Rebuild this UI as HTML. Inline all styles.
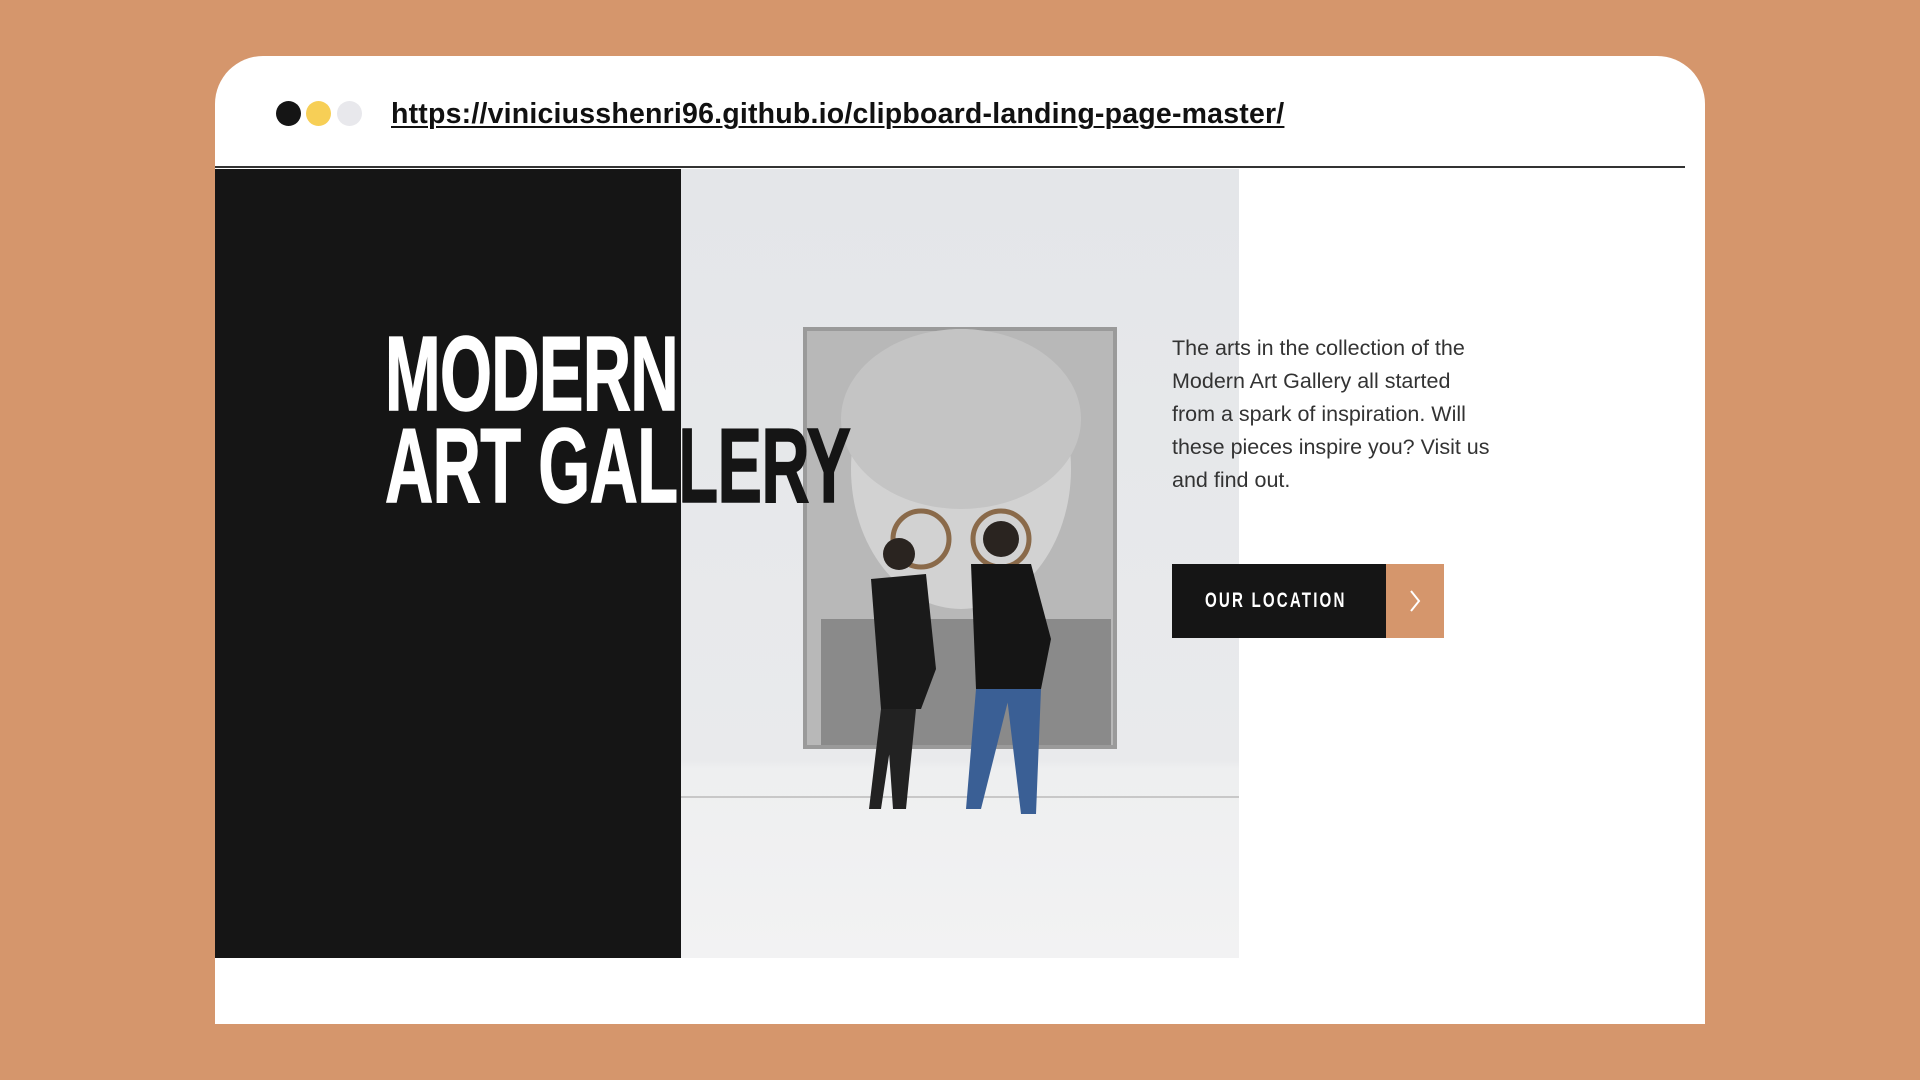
<!DOCTYPE html>
<html><head><meta charset="utf-8"><style>
html,body{margin:0;padding:0;width:1920px;height:1080px;overflow:hidden;background:#D5966C;font-family:"Liberation Sans",sans-serif}
.card{position:absolute;left:215px;top:56px;width:1490px;height:968px;background:#fff;border-radius:48px 48px 0 0}
.dot{position:absolute;top:101px;width:25px;height:25px;border-radius:50%}
.url{position:absolute;left:391px;top:98px;font-size:28.5px;font-weight:bold;color:#111;text-decoration:underline;text-decoration-thickness:2px;text-underline-offset:3px;letter-spacing:0.2px}
.line{position:absolute;left:215px;top:166px;width:1470px;height:2px;background:#333}
.black{position:absolute;left:215px;top:169px;width:466px;height:789px;background:#151515}
.img{position:absolute;left:681px;top:169px;width:558px;height:789px;background:linear-gradient(#e4e6e9 0%,#e9eaec 75%,#eeeff0 76%,#f2f2f3 100%);overflow:hidden}
.h{position:absolute;left:385px;top:328px;font-family:"Liberation Sans Narrow","Liberation Sans",sans-serif;font-weight:bold;font-size:106px;line-height:92px;transform:scaleX(0.63);transform-origin:left top;white-space:nowrap;letter-spacing:-1px;-webkit-text-stroke:1.5px currentColor}
.p{position:absolute;left:1172px;top:332px;width:322px;font-size:21.5px;line-height:33px;color:#333}
.btn{position:absolute;left:1172px;top:564px;width:214px;height:74px;background:#151515}
.btn span{position:absolute;left:33px;top:0;color:#fff;font-weight:bold;font-size:21px;letter-spacing:3px;line-height:74px;white-space:nowrap;transform:scaleX(0.72);transform-origin:left center;font-family:"Liberation Sans Narrow","Liberation Sans",sans-serif}
.arr{position:absolute;left:1386px;top:564px;width:58px;height:74px;background:#D5966C}
</style></head><body>
<div class="card"></div>
<div class="dot" style="left:276px;background:#151515"></div>
<div class="dot" style="left:306px;background:#F7CF56"></div>
<div class="dot" style="left:337px;background:#e8e8ec"></div>
<div class="url">https://viniciusshenri96.github.io/clipboard-landing-page-master/</div>
<div class="line"></div>
<div class="black"></div>
<div class="img">
<svg width="558" height="789" viewBox="0 0 558 789">
<rect x="122" y="158" width="314" height="422" fill="#9a9a9a"/>
<rect x="126" y="162" width="306" height="414" fill="#b8b8b8"/>
<ellipse cx="280" cy="300" rx="110" ry="140" fill="#d2d2d2"/>
<ellipse cx="280" cy="250" rx="120" ry="90" fill="#c4c4c4"/>
<rect x="140" y="450" width="290" height="126" fill="#8a8a8a"/>
<circle cx="240" cy="370" r="28" fill="none" stroke="#8a6a4a" stroke-width="5"/>
<circle cx="320" cy="370" r="28" fill="none" stroke="#8a6a4a" stroke-width="5"/>
<line x1="0" y1="628" x2="558" y2="628" stroke="#c8c8c8" stroke-width="2"/>
<circle cx="218" cy="385" r="16" fill="#2a2420"/>
<path d="M190 410 L245 405 L255 500 L240 540 L200 540 Z" fill="#1a1a1a"/>
<path d="M205 540 L235 540 L225 640 L212 640 Z M200 540 L215 540 L200 640 L188 640 Z" fill="#222"/>
<circle cx="320" cy="370" r="18" fill="#2a2420"/>
<path d="M290 395 L350 395 L370 470 L360 520 L295 520 Z" fill="#151515"/>
<path d="M295 520 L330 520 L300 640 L285 640 Z M325 520 L360 520 L355 645 L340 645 Z" fill="#3a5f95"/>
</svg>
</div>
<div class="h" style="color:#fff"><div style="clip-path:polygon(0 0,472px 0,472px 300px,0 300px)">MODERN<br>ART GALLERY</div></div>
<div class="h" style="color:#151515"><div style="clip-path:polygon(472px 0,1000px 0,1000px 300px,472px 300px)">MODERN<br>ART GALLERY</div></div>
<div class="p">The arts in the collection of the Modern Art Gallery all started from a spark of inspiration. Will these pieces inspire you? Visit us and find out.</div>
<div class="btn"><span>OUR LOCATION</span></div>
<div class="arr"><svg width="58" height="74"><path d="M25 27 L33 37 L25 47" fill="none" stroke="#fff" stroke-width="2"/></svg></div>
</body></html>
